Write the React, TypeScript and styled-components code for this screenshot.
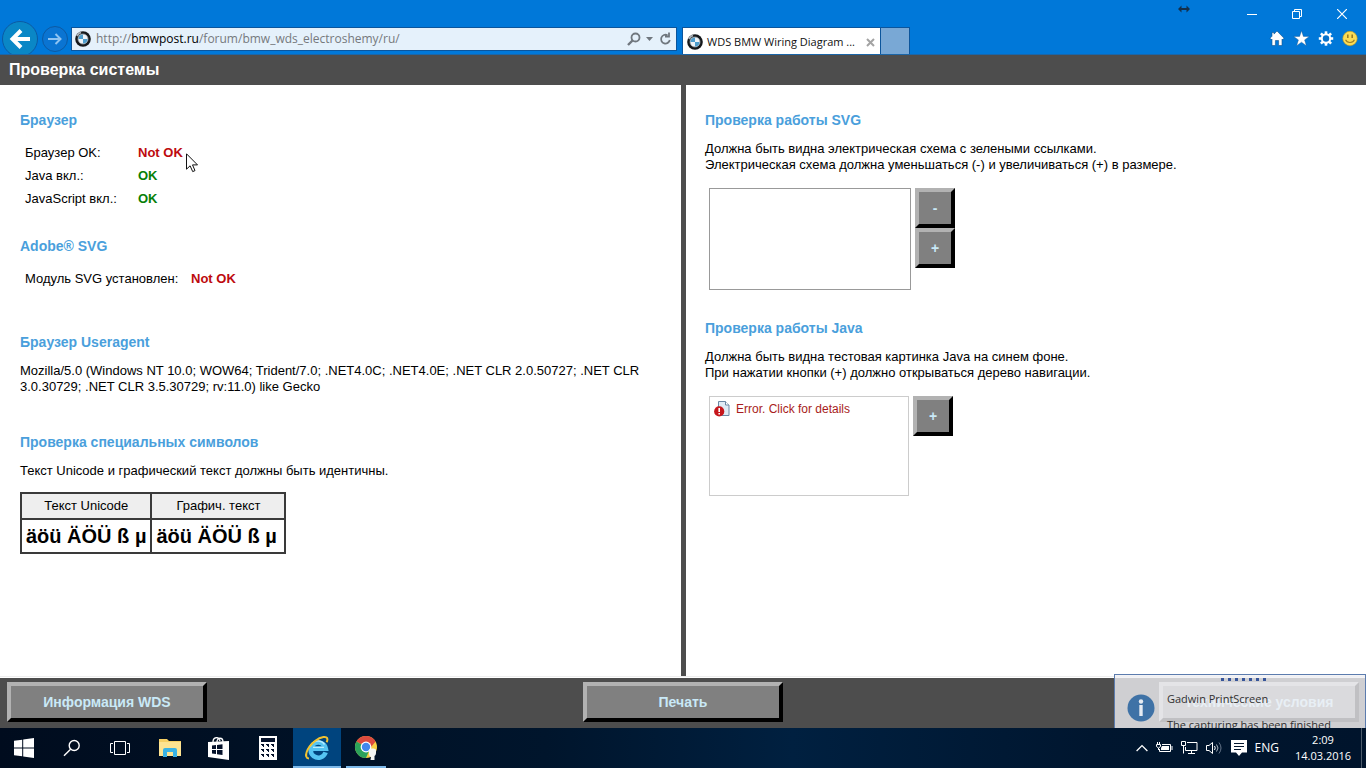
import React from "react";
import styled, { createGlobalStyle, css } from "styled-components";

const GlobalStyle = createGlobalStyle`
  *, *::before, *::after { box-sizing: border-box; }
  body {
    margin: 0;
    background: #fff;
    color: #000;
    font: 13px/16px "Liberation Sans", Arial, sans-serif;
  }
  button { font: inherit; cursor: default; }
  svg { flex: none; }
  h1, h2, p { margin: 0; }
`;

const uiFont = css`
  font-family: "Open Sans", "Noto Sans", sans-serif;
  font-size: 12px;
  line-height: 16px;
`;

const Screen = styled.div`
  display: flex;
  flex-direction: column;
  min-height: 100vh;
`;

/* ---------- browser chrome ---------- */

const Chrome = styled.header`
  ${uiFont}
  background: #0078d9;
  border-bottom: 1px solid #1b66a8;
  overflow: hidden;
`;

const TitleBar = styled.div`
  display: flex;
  justify-content: flex-end;
  height: 27px;
  padding-right: 2px;
`;

const DragMark = styled.span`
  display: flex;
  margin: 4px 39px 0 0;
  height: 10px;
`;

const WindowButton = styled.button`
  display: flex;
  align-items: center;
  justify-content: center;
  width: 45px;
  height: 27px;
  padding: 0;
  border: 0;
  background: none;
`;

const NavBar = styled.div`
  display: grid;
  grid-template-columns: 1fr 1fr;
  height: 27px;
`;

const AddressSide = styled.form`
  display: flex;
  align-items: flex-start;
  padding: 0 6px 0 2px;
  height: 27px;
`;

const RoundButton = styled.button<{ $big?: boolean }>`
  display: flex;
  flex: none;
  align-items: center;
  justify-content: center;
  width: ${(p) => (p.$big ? 36 : 26)}px;
  height: ${(p) => (p.$big ? 36 : 26)}px;
  margin-top: ${(p) => (p.$big ? -6 : -1)}px;
  margin-right: ${(p) => (p.$big ? 4 : 3)}px;
  padding: 0;
  border: 1px solid #0c5aa3;
  border-radius: 50%;
  background: ${(p) => (p.$big ? "#0a87c6" : "#0a74d2")};
`;

const AddressBox = styled.div`
  display: flex;
  flex: 1;
  align-items: center;
  height: 24px;
  padding: 0 4px 0 3px;
  border: 1px solid #0b559c;
  background: #e5f1fb;
`;

const Url = styled.a`
  flex: 1;
  margin-left: 5px;
  color: #76797d;
  text-decoration: none;
  b { color: #000; font-weight: 400; }
`;

const BareButton = styled.button`
  display: flex;
  align-items: center;
  justify-content: center;
  padding: 0;
  border: 0;
  background: none;
`;

const AddressTools = styled.div`
  display: flex;
  align-items: center;
  gap: 5px;
`;

const TabSide = styled.div`
  display: flex;
  height: 27px;
  margin-left: -1px;
`;

const Tab = styled.div`
  display: flex;
  align-items: center;
  width: 199px;
  height: 27px;
  padding: 2px 5px 0 4px;
  border: 1px solid #0b559c;
  border-bottom: 0;
  background: #fff;
  color: #111;
`;

const TabTitle = styled.span`
  flex: 1;
  margin-left: 4px;
  font-size: 11px;
  white-space: nowrap;
`;

const NewTab = styled.button`
  width: 29px;
  height: 27px;
  border: 1px solid #0b559c;
  border-width: 1px 1px 0 0;
  background: #79a8d5;
`;

const ChromeTools = styled.div`
  display: flex;
  gap: 8px;
  margin-left: auto;
  padding: 0 8px 5px 0;
`;

/* ---------- page ---------- */

const PageTitle = styled.h1`
  height: 30px;
  padding: 0 9px;
  background: #4d4d4d;
  color: #fff;
  font-size: 16px;
  font-weight: 700;
  line-height: 30px;
`;

const Panels = styled.main`
  display: grid;
  grid-template-columns: 1fr 1fr;
  flex: 1;
  margin-bottom: 1px;
  border-bottom: 1px solid #eee;
`;

const Panel = styled.div<{ $divided?: boolean }>`
  padding: 27px 20px 20px;
  border-right: ${(p) => (p.$divided ? "5px solid #4d4d4d" : "0")};
  margin-right: ${(p) => (p.$divided ? -3 : 0)}px;
  padding-left: ${(p) => (p.$divided ? 20 : 22)}px;
`;

const Section = styled.section<{ $gap: number }>`
  margin-bottom: ${(p) => p.$gap}px;
`;

const Heading = styled.h2`
  margin-bottom: 13px;
  color: #4a9fdc;
  font-size: 14px;
  font-weight: 700;
  line-height: 16px;
`;

const Checks = styled.table`
  border-collapse: collapse;
  td, th {
    height: 23px;
    padding: 0 5px;
    font-weight: 400;
    text-align: left;
  }
`;

const NameCell = styled.th<{ $width: number }>`
  min-width: ${(p) => p.$width}px;
`;

const Status = styled.td<{ $ok?: boolean }>`
  position: relative;
  && {
    padding: 0 3px;
    font-weight: 700;
  }
  color: ${(p) => (p.$ok ? "#078007" : "#bd0a0e")};
`;

const Pointer = styled.svg`
  position: absolute;
  top: 12px;
  left: 100%;
`;

const Symbols = styled.table`
  margin-top: 13px;
  border-collapse: collapse;
  border: 2px solid #3a3a3a;
  text-align: center;
  th {
    height: 26px;
    padding: 0 4px;
    border: 2px solid #3a3a3a;
    background: #eee;
    font-weight: 400;
  }
  th:last-child { min-width: 134px; }
  td {
    height: 34px;
    padding: 0 4px;
    border: 2px solid #3a3a3a;
    font-size: 20px;
    font-weight: 700;
    line-height: 24px;
    text-align: left;
    white-space: nowrap;
  }
`;

const Demo = styled.div`
  display: flex;
  gap: 4px;
  margin: 15px 0 0 4px;
`;

const SvgBox = styled.div`
  width: 202px;
  height: 102px;
  border: 1px solid #999;
`;

const JavaBox = styled.div`
  width: 200px;
  height: 100px;
  padding: 4px;
  border: 1px solid #ccc;
`;

const ErrorLink = styled.a`
  display: flex;
  gap: 6px;
  color: #a81c20;
  font-size: 12px;
  text-decoration: none;
`;

const Stack = styled.div`
  display: flex;
  flex-direction: column;
`;

const BevelButton = styled.button<{ $wide?: boolean }>`
  width: ${(p) => (p.$wide ? 200 : 40)}px;
  height: 40px;
  padding: 0;
  border: 4px solid;
  border-color: #b2b2b2 #000 #000 #b2b2b2;
  background: #808080;
  color: #c9e9f7;
  font-size: 14px;
  font-weight: 700;
`;

const Footer = styled.footer`
  position: relative;
  display: flex;
  justify-content: space-between;
  padding: 4px 7px 6px;
  background: #4d4d4d;
`;

const Toast = styled.aside`
  ${uiFont}
  position: absolute;
  right: 0;
  bottom: 0;
  display: flex;
  gap: 12px;
  width: 252px;
  height: 54px;
  padding: 16px 8px 0 12px;
  overflow: hidden;
  border: 1px solid #5c7cae;
  border-bottom: 0;
  background: rgba(240, 240, 244, 0.8);
  color: #303030;
  font-size: 11px;
`;

const ToastGrip = styled.span`
  position: absolute;
  top: 3px;
  left: 106px;
  width: 45px;
  height: 3px;
  background: repeating-linear-gradient(90deg, #37559a 0 3px, transparent 3px 7px);
`;

const ToastText = styled.div`
  display: flex;
  flex-direction: column;
  gap: 10px;
  white-space: nowrap;
`;

/* ---------- taskbar ---------- */

const Taskbar = styled.nav`
  ${uiFont}
  display: flex;
  justify-content: space-between;
  height: 40px;
  background: linear-gradient(90deg, #000c1e, #00152c 40%, #002040 58%, #00162f 80%, #00142c);
  color: #fff;
`;

const Group = styled.div`
  display: flex;
`;

const Apps = styled.div`
  display: flex;
  gap: 1px;
  margin-left: 2px;
`;

const TaskButton = styled.button<{ $state?: "active" | "open" }>`
  position: relative;
  display: flex;
  align-items: center;
  justify-content: center;
  width: 48px;
  height: 40px;
  padding: 0;
  border: 0;
  background: ${(p) => (p.$state === "active" ? "#00447e" : "none")};
  &::after {
    content: "";
    position: absolute;
    bottom: 0;
    left: ${(p) => (p.$state === "active" ? 0 : 4)}px;
    right: ${(p) => (p.$state === "active" ? 0 : 4)}px;
    height: 2px;
    background: ${(p) => (p.$state ? "#7db9ea" : "none")};
  }
`;

const Tray = styled.div`
  display: flex;
  align-items: center;
  gap: 8px;
  padding-right: 4px;
`;

const Clock = styled.time`
  display: flex;
  flex-direction: column;
  width: 60px;
  margin-left: 6px;
  font-size: 11px;
  text-align: center;
`;

const ShowDesktop = styled.button`
  width: 1px;
  height: 40px;
  padding: 0;
  border: 0;
  background: #4c5b6b;
`;

/* ---------- drawings ---------- */

const BmwLogo = () => (
  <svg width="16" height="16" viewBox="0 0 16 16" aria-hidden="true">
    <circle cx="8" cy="8" r="7.8" fill="#15181b" />
    <path d="M2 5A6.8 6.8 0 0 1 6 1.4" stroke="#a9afb5" strokeWidth="2" fill="none" />
    <circle cx="8" cy="8" r="4.8" fill="#eef4f8" />
    <path d="M8 8V3.2A4.8 4.8 0 0 0 3.2 8ZM8 8V12.8A4.8 4.8 0 0 0 12.8 8Z" fill="#4d9dcc" />
    <circle cx="8" cy="8" r="5" fill="none" stroke="#c9d0d6" strokeWidth=".6" />
  </svg>
);

const Home = () => (
  <svg width="16" height="17" viewBox="0 0 16 17" aria-hidden="true">
    <path d="M8 1 15 8.2 13.6 9.6 13 9v6.5H9.6V10.5H6.4v5H3V9l-.6.6L1 8.2 3 6.2V2.5h2v1.6Z" fill="#fff" stroke="#11518c" strokeWidth=".6" />
  </svg>
);

const Star = () => (
  <svg width="17" height="17" viewBox="0 0 17 17" aria-hidden="true">
    <path d="m8.5 .8 1.9 5.6h5.9l-4.7 3.5 1.8 5.8-4.9-3.5-4.9 3.5 1.8-5.8L.7 6.4h5.9Z" fill="#fff" stroke="#11518c" strokeWidth=".4" />
  </svg>
);

const Gear = () => (
  <svg width="16" height="17" viewBox="-8 -8.5 16 17" aria-hidden="true">
    {[0, 45, 90, 135].map((a) => (
      <path key={a} d="M-1.3-7.2h2.6v14.4h-2.6Z" fill="#fff" transform={`rotate(${a})`} />
    ))}
    <circle r="5.2" fill="#fff" />
    <circle r="3.2" fill="#0872cb" />
  </svg>
);

const Smile = () => (
  <svg width="16" height="17" viewBox="0 0 16 17" aria-hidden="true">
    <circle cx="8" cy="8.5" r="7.2" fill="#fbdc55" stroke="#c29a1c" strokeWidth=".6" />
    <path d="M5 4.5h1.6v3.4H5ZM9.4 4.5H11v3.4H9.4Z" fill="#9a7c22" />
    <path d="M3.6 9.8c1.4 3.6 7.4 3.6 8.8 0" fill="none" stroke="#9a7c22" strokeWidth="1.1" />
  </svg>
);

const InternetExplorer = () => (
  <svg width="26" height="26" viewBox="0 0 26 26" aria-hidden="true">
    <path d="M21.6 17.4A7.600 7.600 0 1 1 21.800 13.600H9" fill="none" stroke="#55c4f2" strokeWidth="4.600" />
    <path d="M6.200 12A8 8 0 0 1 20.500 9.500M9 12.400h11" fill="none" stroke="#b9ecff" strokeWidth="1.400" />
    <path d="M5 23.400C-1 23 2.800 12.500 11 6 17 1.400 23.400.6 23.400 4.200c0 1-.3 2-.8 3" fill="none" stroke="#f2c230" strokeWidth="2" />
  </svg>
);

const ChromeLogo = () => (
  <svg width="24" height="26" viewBox="0 0 24 26" aria-hidden="true">
    <circle cx="12" cy="12" r="11" fill="#f8cf45" />
    <path d="M12 12 2.470 6.500A11 11 0 0 1 21.530 6.500Z" fill="#dc4a3e" />
    <path d="M12 12 2.470 6.500A11 11 0 0 0 12 23L15 16Z" fill="#2ba25a" />
    <path d="M12 6.500h9.530l-4.500 5.500Z" fill="#dc4a3e" />
    <circle cx="12" cy="12" r="5.400" fill="#fff" />
    <circle cx="12" cy="12" r="4.200" fill="#4387ee" />
    <path d="M15 15c0-2 7-2 7 0v3c0 1.500-.8 2.500-1.500 3v4h-4l.5-3c-1.400-.5-2-2-2-3.500Z" fill="#f4f6f4" />
  </svg>
);

const Windows = () => (
  <svg width="20" height="20" viewBox="0 0 20 20" fill="#fff" aria-hidden="true">
    <path d="M0 2.800 8.200 1.700V9.500H0ZM9.200 1.500 20 0V9.500H9.200ZM0 10.500h8.200v7.800L0 17.200ZM9.200 10.500H20V20L9.200 18.500Z" />
  </svg>
);

const Search = () => (
  <svg width="18" height="18" viewBox="0 0 18 18" fill="none" stroke="#fff" strokeWidth="1.400" aria-hidden="true">
    <circle cx="11.200" cy="6.500" r="5" />
    <path d="M7.600 10.200 1 16.800" />
  </svg>
);

const TaskView = () => (
  <svg width="20" height="16" viewBox="0 0 20 16" fill="none" stroke="#fff" aria-hidden="true">
    <path d="M4.500 1.500h11v13h-11ZM3 3.500H.5v9H3M17 3.500h2.500v9H17" />
  </svg>
);

const Folder = () => (
  <svg width="22" height="20" viewBox="0 0 22 20" aria-hidden="true">
    <path d="M0 1h8l2 2h12v15H0Z" fill="#f6cf63" />
    <path d="M0 4h22v14H0Z" fill="#fde391" />
    <path d="M4 19V12q0-2 2-2h10q2 0 2 2v7h-4v-5H8v5Z" fill="#39b2e4" />
  </svg>
);

const Store = () => (
  <svg width="22" height="24" viewBox="0 0 22 24" aria-hidden="true">
    <path d="M5 6C5 1 11 0 12 5M9 6c0-5 6-5 6 0" fill="none" stroke="#fff" strokeWidth="1.300" />
    <path d="M0 6 21 5v19L0 21Z" fill="#fff" />
    <path d="M4 9.500 8 9v4H4ZM9 8.900l5.500-.6V13H9ZM4 14h4v4l-4-.5ZM9 14h5.500v5L9 18.200Z" fill="#04112a" />
  </svg>
);

const Calculator = () => (
  <svg width="18" height="24" viewBox="0 0 18 24" aria-hidden="true">
    <path d="M0 0h18v24H0Z" fill="#fff" />
    <path d="M2 2h14v4H2Z" fill="#04112a" />
    {[8, 13, 18].map((y) =>
      [2, 7, 12].map((x) => <path key={`${x}-${y}`} d={`M${x} ${y}h3v3h-1v-1h-1v-1h-1Z`} fill="#04112a" />)
    )}
  </svg>
);

const Chevron = () => (
  <svg width="12" height="8" viewBox="0 0 12 8" fill="none" stroke="#fff" strokeWidth="1.300" aria-hidden="true">
    <path d="m.6 7 5.400-5.400L11.400 7" />
  </svg>
);

const Battery = () => (
  <svg width="17" height="12" viewBox="0 0 17 12" fill="none" stroke="#fff" aria-hidden="true">
    <path d="M6 2.500h8.500v7H3.500V7M16 4v4" />
    <path d="M6 4h7v4H5V6Z" fill="#fff" stroke="none" />
    <path d="M1.500 0v2M3.500 0v2M.5 2.500h4v2l-2 1.500-2-1.500ZM2.500 6v2" />
  </svg>
);

const Network = () => (
  <svg width="17" height="14" viewBox="0 0 17 14" fill="none" stroke="#fff" aria-hidden="true">
    <path d="M6 1.500h10v8H4.500V6M7 12.500h7M10.500 10v3M.5.500h4v4h-4ZM2.500 5v7.500" />
  </svg>
);

const Volume = () => (
  <svg width="17" height="14" viewBox="0 0 17 14" fill="none" stroke="#fff" aria-hidden="true">
    <path d="M.5 4.500H3L6.500 1.500v11L3 9.500H.5ZM8.500 5q1.500 2 0 4" />
    <path d="M10.500 3.500q3 3.500 0 7" stroke="#aeb7c2" />
    <path d="M13 1.500q4 5.500 0 11" stroke="#66758a" />
  </svg>
);

const ActionCenter = () => (
  <svg width="16" height="16" viewBox="0 0 16 16" aria-hidden="true">
    <path d="M0 0h16v12.500H11L8 16 5 12.500H0Z" fill="#fff" />
    <path d="M3 3.500h10M3 6.500h10M3 9.500h7" stroke="#04172f" />
  </svg>
);

const BrokenDocument = () => (
  <svg width="16" height="16" viewBox="0 0 16 16" aria-hidden="true">
    <path d="M4.500.5h7l3.500 3.500v10.500H4.500Z" fill="#dfeaf4" stroke="#6a87a3" />
    <path d="M11.500.5V4H15" fill="#fff" stroke="#6a87a3" />
    <circle cx="5.200" cy="10.400" r="5.100" fill="#c6171c" />
    <path d="M5.200 7v4M5.200 12v1.600" stroke="#fff" strokeWidth="1.600" />
  </svg>
);

/* ---------- page content ---------- */

const checks = [
  { name: "Браузер OK:", ok: false },
  { name: "Java вкл.:", ok: true },
  { name: "JavaScript вкл.:", ok: true },
];

export default function App() {
  return (
    <Screen>
      <GlobalStyle />
      <Chrome>
        <TitleBar>
          <DragMark>
            <svg width="12" height="10" viewBox="0 0 12 10" aria-hidden="true">
              <path d="M0 5 3.500 1.500V4h5V1.500L12 5 8.500 8.500V6h-5v2.500Z" fill="#13304d" />
            </svg>
          </DragMark>
          <WindowButton aria-label="Minimize">
            <svg width="10" height="10"><path d="M0 5.500h10" stroke="#fff" /></svg>
          </WindowButton>
          <WindowButton aria-label="Restore">
            <svg width="10" height="10" fill="none" stroke="#fff">
              <path d="M.5 2.500h7v7h-7ZM2.500 2.500v-2h7v7h-2" />
            </svg>
          </WindowButton>
          <WindowButton aria-label="Close">
            <svg width="10" height="10"><path d="m0 0 10 10M10 0 0 10" stroke="#fff" strokeWidth="1.200" /></svg>
          </WindowButton>
        </TitleBar>
        <NavBar>
          <AddressSide>
            <RoundButton type="button" $big aria-label="Back">
              <svg width="22" height="20" viewBox="0 0 22 20" fill="none" stroke="#fff" strokeWidth="4">
                <path d="M21 10H4M12 1.500 3.500 10l8.500 8.500" />
              </svg>
            </RoundButton>
            <RoundButton type="button" aria-label="Forward">
              <svg width="14" height="12" viewBox="0 0 14 12" fill="none" stroke="#8fc3f2" strokeWidth="2">
                <path d="M0 6h12M7.500 1l5 5-5 5" />
              </svg>
            </RoundButton>
            <AddressBox>
              <BmwLogo />
              <Url href="http://bmwpost.ru/forum/bmw_wds_electroshemy/ru/">
                http://<b>bmwpost.ru</b>/forum/bmw_wds_electroshemy/ru/
              </Url>
              <AddressTools>
                <BareButton type="button" aria-label="Search">
                  <svg width="14" height="14" fill="none" stroke="#70777e" strokeWidth="1.800">
                    <circle cx="8.500" cy="5.500" r="4" />
                    <path d="M5.500 8.500 1 13" strokeWidth="2.400" />
                  </svg>
                </BareButton>
                <BareButton type="button" aria-label="Show address list">
                  <svg width="7" height="4"><path d="M0 0h7L3.500 4Z" fill="#70777e" /></svg>
                </BareButton>
                <BareButton type="button" aria-label="Refresh">
                  <svg width="14" height="14" fill="none" stroke="#70777e" strokeWidth="1.800">
                    <path d="M9.500 3.200A4.400 4.400 0 1 0 11.800 8M11 .5V4.500H7" />
                  </svg>
                </BareButton>
              </AddressTools>
            </AddressBox>
          </AddressSide>
          <TabSide>
            <Tab>
              <BmwLogo />
              <TabTitle>WDS BMW Wiring Diagram ...</TabTitle>
              <BareButton aria-label="Close tab">
                <svg width="9" height="9"><path d="m1 1 7 7M8 1 1 8" stroke="#a3a3a3" strokeWidth="2" /></svg>
              </BareButton>
            </Tab>
            <NewTab aria-label="New tab" />
            <ChromeTools>
              <BareButton aria-label="Home"><Home /></BareButton>
              <BareButton aria-label="Favorites"><Star /></BareButton>
              <BareButton aria-label="Tools"><Gear /></BareButton>
              <BareButton aria-label="Feedback"><Smile /></BareButton>
            </ChromeTools>
          </TabSide>
        </NavBar>
      </Chrome>

      <PageTitle>Проверка системы</PageTitle>

      <Panels>
        <Panel $divided>
          <Section $gap={28}>
            <Heading>Браузер</Heading>
            <Checks>
              <tbody>
                {checks.map((c, i) => (
                  <tr key={c.name}>
                    <NameCell scope="row" $width={115}>{c.name}</NameCell>
                    <Status $ok={c.ok}>
                      {c.ok ? "OK" : "Not OK"}
                      {i === 0 && (
                        <Pointer width="13" height="20" viewBox="0 0 13 20" aria-hidden="true">
                          <path d="M.5.800v15.400l3.600-3.400 2.600 5.800 2.300-1-2.500-5.700h5Z" fill="#fff" stroke="#111" />
                        </Pointer>
                      )}
                    </Status>
                  </tr>
                ))}
              </tbody>
            </Checks>
          </Section>
          <Section $gap={44}>
            <Heading>Adobe® SVG</Heading>
            <Checks>
              <tbody>
                <tr>
                  <NameCell scope="row" $width={168}>Модуль SVG установлен:</NameCell>
                  <Status>Not OK</Status>
                </tr>
              </tbody>
            </Checks>
          </Section>
          <Section $gap={39}>
            <Heading>Браузер Useragent</Heading>
            <p>
              Mozilla/5.0 (Windows NT 10.0; WOW64; Trident/7.0; .NET4.0C; .NET4.0E; .NET CLR 2.0.50727; .NET CLR
              3.0.30729; .NET CLR 3.5.30729; rv:11.0) like Gecko
            </p>
          </Section>
          <Section $gap={0}>
            <Heading>Проверка специальных символов</Heading>
            <p>Текст Unicode и графический текст должны быть идентичны.</p>
            <Symbols>
              <thead>
                <tr>
                  <th scope="col">Текст Unicode</th>
                  <th scope="col">Графич. текст</th>
                </tr>
              </thead>
              <tbody>
                <tr>
                  <td>äöü ÄÖÜ ß µ</td>
                  <td>äöü ÄÖÜ ß µ</td>
                </tr>
              </tbody>
            </Symbols>
          </Section>
        </Panel>
        <Panel>
          <Section $gap={30}>
            <Heading>Проверка работы SVG</Heading>
            <p>
              Должна быть видна электрическая схема с зелеными ссылками.
              <br />
              Электрическая схема должна уменьшаться (-) и увеличиваться (+) в размере.
            </p>
            <Demo>
              <SvgBox />
              <Stack>
                <BevelButton>-</BevelButton>
                <BevelButton>+</BevelButton>
              </Stack>
            </Demo>
          </Section>
          <Section $gap={0}>
            <Heading>Проверка работы Java</Heading>
            <p>
              Должна быть видна тестовая картинка Java на синем фоне.
              <br />
              При нажатии кнопки (+) должно открываться дерево навигации.
            </p>
            <Demo>
              <JavaBox>
                <ErrorLink href="#details">
                  <BrokenDocument />
                  Error. Click for details
                </ErrorLink>
              </JavaBox>
              <BevelButton>+</BevelButton>
            </Demo>
          </Section>
        </Panel>
      </Panels>

      <Footer>
        <BevelButton $wide>Информация WDS</BevelButton>
        <BevelButton $wide>Печать</BevelButton>
        <BevelButton $wide>Технические условия</BevelButton>
        <Toast>
          <ToastGrip />
          <svg width="28" height="34" viewBox="0 0 28 34" aria-hidden="true">
            <circle cx="14" cy="17" r="13.500" fill="#3f72a6" />
            <circle cx="14" cy="10.500" r="2.200" fill="#e6ebf2" />
            <path d="M14 14v11" stroke="#e6ebf2" strokeWidth="3.400" />
          </svg>
          <ToastText>
            <span>Gadwin PrintScreen</span>
            <span>The capturing has been finished</span>
          </ToastText>
        </Toast>
      </Footer>

      <Taskbar>
        <Group>
          <TaskButton aria-label="Start"><Windows /></TaskButton>
          <TaskButton aria-label="Search"><Search /></TaskButton>
          <TaskButton aria-label="Task view"><TaskView /></TaskButton>
          <Apps>
            <TaskButton aria-label="File Explorer"><Folder /></TaskButton>
            <TaskButton aria-label="Store"><Store /></TaskButton>
            <TaskButton aria-label="Calculator"><Calculator /></TaskButton>
            <TaskButton aria-label="Internet Explorer" $state="active"><InternetExplorer /></TaskButton>
            <TaskButton aria-label="Chrome" $state="open"><ChromeLogo /></TaskButton>
          </Apps>
        </Group>
        <Tray>
          <Chevron />
          <Battery />
          <Network />
          <Volume />
          <ActionCenter />
          <span>ENG</span>
          <Clock dateTime="2016-03-14T02:09">
            <span>2:09</span>
            <span>14.03.2016</span>
          </Clock>
          <ShowDesktop aria-label="Show desktop" />
        </Tray>
      </Taskbar>
    </Screen>
  );
}
